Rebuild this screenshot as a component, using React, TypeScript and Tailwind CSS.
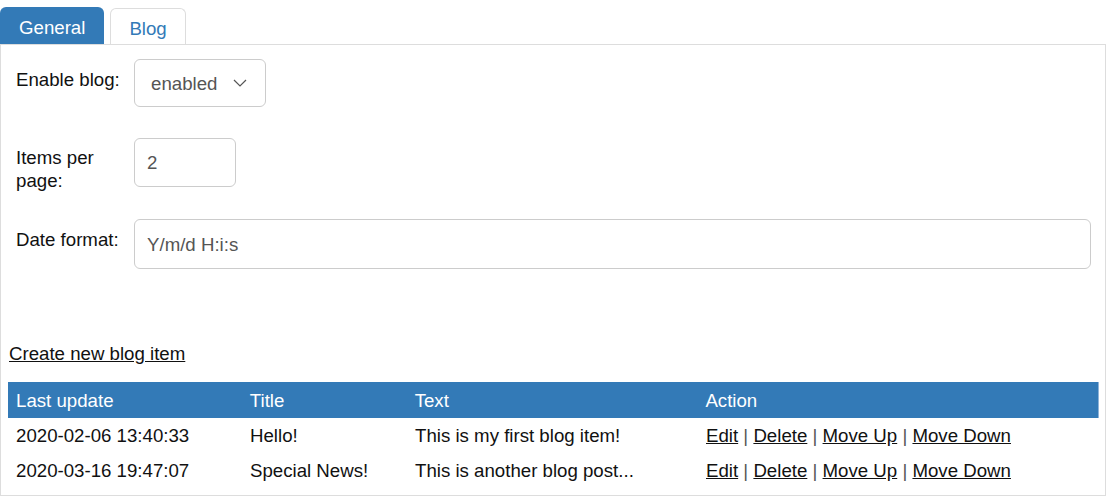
import React from "react";

export default function App() {
  const rows = [
    { date: "2020-02-06 13:40:33", title: "Hello!", text: "This is my first blog item!" },
    { date: "2020-03-16 19:47:07", title: "Special News!", text: "This is another blog post..." },
  ];
  return (
    <div className="w-[1107px] h-[504px] bg-white font-['Liberation_Sans',Arial,sans-serif] text-[18.67px] leading-[23px] text-[#111]">
      {/* Tabs */}
      <div className="flex items-end gap-[6px] h-[44px]">
        <div className="h-[37px] px-[19px] pt-[3px] bg-[#337ab7] text-white rounded-t-[6px] flex items-center">
          General
        </div>
        <div className="h-[36px] px-[18px] pt-[3px] bg-white text-[#337ab7] rounded-t-[6px] border border-b-0 border-[#dddddd] flex items-center">
          Blog
        </div>
      </div>
      {/* Panel */}
      <div className="w-[1106px] h-[452px] border border-[#dddddd] pl-[7px] pr-[6px]">
        <div className="flex mt-[14px]">
          <div className="w-[110px] ml-[8px] pt-[9px]">Enable blog:</div>
          <div className="ml-[8px] w-[132px] h-[48px] border border-[#cccccc] rounded-[6px] flex items-center pl-[16px] pr-[18px] justify-between text-[#555]">
            <span>enabled</span>
            <svg width="14" height="8" viewBox="0 0 14 8" fill="none">
              <polyline points="1,1 7,7 13,1" stroke="#555" strokeWidth="1.2" />
            </svg>
          </div>
        </div>
        <div className="flex mt-[31px] h-[49px]">
          <div className="w-[110px] ml-[8px] pt-[8px]">Items per page:</div>
          <div className="ml-[8px] w-[102px] h-[49px] border border-[#cccccc] rounded-[6px] flex items-center pl-[12px] text-[#555]">
            2
          </div>
        </div>
        <div className="flex mt-[32px]">
          <div className="w-[110px] ml-[8px] pt-[9px]">Date format:</div>
          <div className="ml-[8px] w-[957px] h-[50px] border border-[#cccccc] rounded-[6px] flex items-center pl-[12px] text-[#555]">
            Y/m/d H:i:s
          </div>
        </div>
        <div className="mt-[73px] ml-[1px]">
          <span className="underline">Create new blog item</span>
        </div>
        <div className="mt-[17px] w-[1091px]">
          <div className="flex h-[36px] items-center bg-[#337ab7] text-white border-r border-[#8fb4d9]">
            <div className="w-[234px] pl-[8px]">Last update</div>
            <div className="w-[165px] pl-[8px]">Title</div>
            <div className="w-[291px] pl-[8px]">Text</div>
            <div className="w-[401px] pl-[8px]">Action</div>
          </div>
          {rows.map((r) => (
            <div key={r.date} className="flex h-[35px] items-center">
              <div className="w-[234px] pl-[8px]">{r.date}</div>
              <div className="w-[165px] pl-[8px]">{r.title}</div>
              <div className="w-[291px] pl-[8px]">{r.text}</div>
              <div className="w-[401px] pl-[8px] whitespace-nowrap">
                <span className="underline">Edit</span> <span className="text-[#555]">|</span>{" "}
                <span className="underline">Delete</span> <span className="text-[#555]">|</span>{" "}
                <span className="underline">Move Up</span> <span className="text-[#555]">|</span>{" "}
                <span className="underline">Move Down</span>
              </div>
            </div>
          ))}
        </div>
      </div>
    </div>
  );
}
